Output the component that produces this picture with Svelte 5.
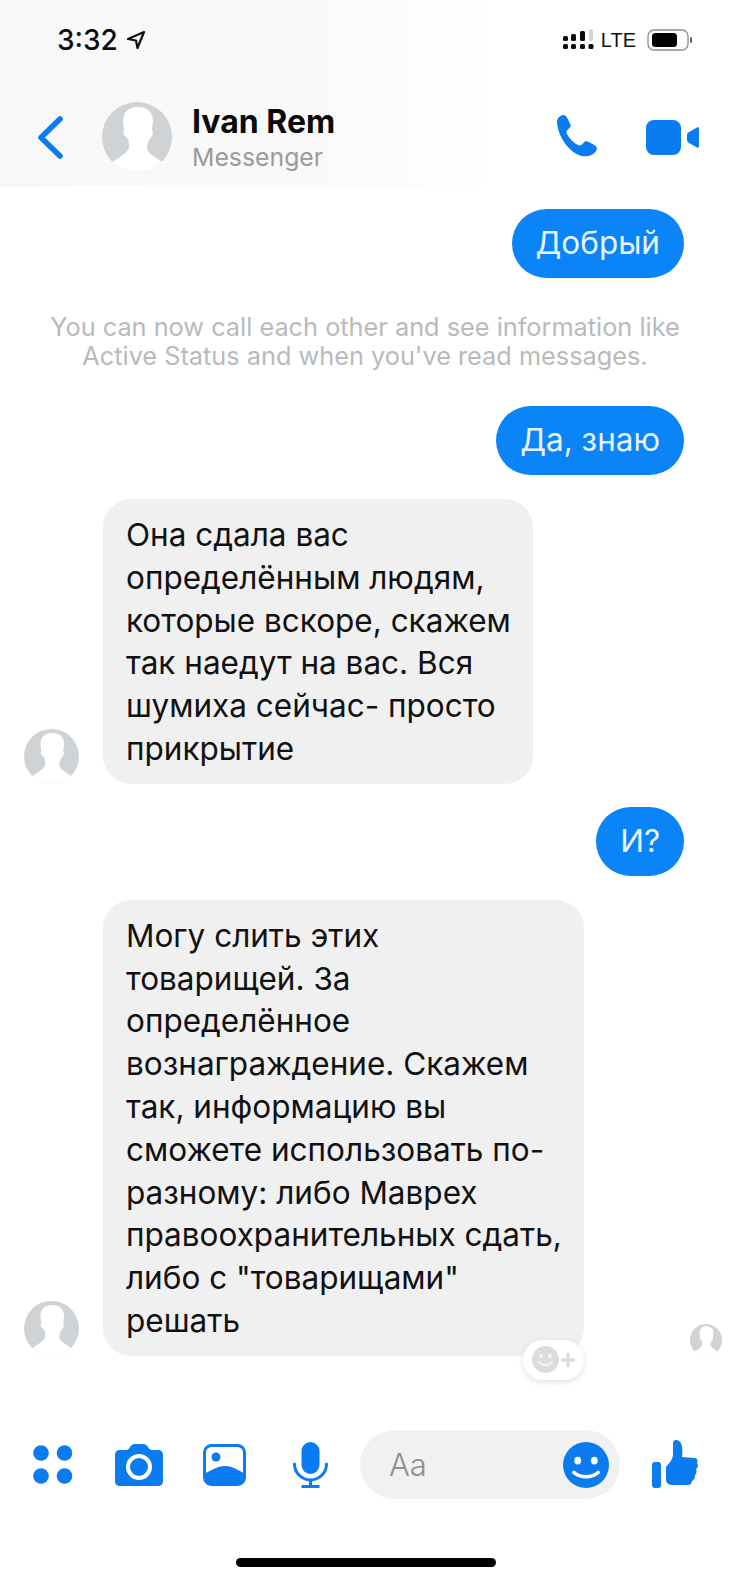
<script>
  const blue = '#0a7cf0';
  const incoming1 = ['Она сдала вас', 'определённым людям,', 'которые вскоре, скажем', 'так наедут на вас. Вся', 'шумиха сейчас- просто', 'прикрытие'];
  const incoming2 = ['Могу слить этих', 'товарищей. За', 'определённое', 'вознаграждение. Скажем', 'так, информацию вы', 'сможете использовать по-', 'разному: либо Маврех', 'правоохранительных сдать,', 'либо с "товарищами"', 'решать'];
</script>

{#snippet silhouette(size)}
  <svg class="silhouette" width={size} height={size} viewBox="0 0 70 70">
    <defs><clipPath id="round-{size}"><circle cx="35" cy="35" r="35" /></clipPath></defs>
    <circle cx="35" cy="35" r="35" fill="#cfd3d6" />
    <path clip-path="url(#round-{size})" d="M36 5c-9 0-15 5-15 14 0 3 1 7 1 9-1 2-1 4 1 6l3 3c1 3 1 6 1 8 0 3-4 7-9 10L7 62v8h56v-8l-10-7c-5-3-8-6-8-9 0-3 1-6 2-8l3-4c1-2 1-4 0-6 0-3 1-6 1-9 0-9-6-14-15-14z" fill="#fff" />
  </svg>
{/snippet}

<div class="screen">
  <header class="top">
    <div class="status">
      <div class="clock">
        <span>3:32</span>
        <svg width="20" height="20" viewBox="0 0 20 20"><path d="M18 2 2 9l8 1.500L11.500 18z" fill="none" stroke="#111" stroke-width="2.200" stroke-linejoin="round" /></svg>
      </div>
      <div class="indicators">
        <svg width="32" height="22" viewBox="0 0 32 22" fill="#0b0b0b">
          <rect x="0" y="7" width="5" height="5" rx="1.500" /><rect x="0" y="15" width="5" height="5" rx="1.500" />
          <rect x="8" y="5" width="5" height="7" rx="1.500" /><rect x="8" y="15" width="5" height="5" rx="1.500" />
          <rect x="17" y="2" width="5" height="10" rx="1.500" /><rect x="17" y="15" width="5" height="5" rx="1.500" />
          <rect x="26" y="0" width="4" height="12" rx="1.500" fill="#d4d4d4" /><rect x="25.500" y="15" width="5" height="5" rx="1.500" />
        </svg>
        <span class="lte">LTE</span>
        <svg width="46" height="22" viewBox="0 0 46 22">
          <rect x="1" y="1" width="40" height="20" rx="6" fill="#fff" stroke="#8c8c8c" stroke-width="1.300" />
          <rect x="5" y="4" width="25" height="14" rx="3.500" fill="#000" />
          <rect x="43" y="8" width="2" height="6" rx="1" fill="#666" />
        </svg>
      </div>
    </div>
    <div class="nav">
      <svg class="back" width="26" height="43" viewBox="0 0 26 43"><path d="M23 3 4 21.500 23 40" fill="none" stroke={blue} stroke-width="5.500" stroke-linecap="round" stroke-linejoin="round" /></svg>
      <div class="nav-avatar">{@render silhouette(70)}</div>
      <div class="title">
        <span class="name">Ivan Rem</span>
        <span class="sub">Messenger</span>
      </div>
      <svg class="phone" width="45" height="44" viewBox="3 1 42 43"><path d="M3 7c0-3 4-6 6-6 2 0 3 1 4 3l3 6c1 2 0 3-1 4l-2 2c-1 1-1 2 0 4 3 5 6 8 10 10 2 1 3 1 4 0l2-2c1-1 2-2 4-1l6 3c2 1 3 2 3 4s-4 7-9 7C20 44 3 24 3 7z" fill={blue} /></svg>
      <svg class="video" width="53" height="35" viewBox="0 0 53 35"><rect x="0" y="0" width="35" height="35" rx="8" fill={blue} /><path d="M41 15c0-1 .500-2 2-3l8-4.500c1-.500 2 0 2 1v18c0 1-1 1.500-2 1l-8-4.500c-1.500-1-2-2-2-3z" fill={blue} /></svg>
    </div>
  </header>

  <main class="thread">
    <div class="bubble out first">Добрый</div>
    <p class="notice">You can now call each other and see information like<br />Active Status and when you've read messages.</p>
    <div class="bubble out second">Да, знаю</div>

    <div class="row one">
      <div class="row-avatar">{@render silhouette(55)}</div>
      <div class="bubble in wide-one">
        {#each incoming1 as line}<div>{line}</div>{/each}
      </div>
    </div>

    <div class="bubble out third">И?</div>

    <div class="row two">
      <div class="row-avatar">{@render silhouette(55)}</div>
      <div class="bubble in wide-two">
        {#each incoming2 as line}<div>{line}</div>{/each}
        <div class="react">
          <svg width="27" height="27" viewBox="0 0 27 27"><circle cx="13.500" cy="13.500" r="13.500" fill="#dcdcdc" /><circle cx="9" cy="10" r="2" fill="#f4f4f4" /><circle cx="18" cy="10" r="2" fill="#f4f4f4" /><path d="M7 16c3 4 10 4 13 0" fill="none" stroke="#f4f4f4" stroke-width="2" stroke-linecap="round" /></svg>
          <svg width="14" height="14" viewBox="0 0 14 14"><path d="M7 1v12M1 7h12" stroke="#dcdcdc" stroke-width="3.500" stroke-linecap="round" /></svg>
        </div>
      </div>
      <div class="seen">{@render silhouette(32)}</div>
    </div>
  </main>

  <footer class="composer">
    <svg width="40" height="39" viewBox="0 0 40 39" fill={blue}><circle cx="8" cy="8" r="7.800" /><circle cx="31.500" cy="8" r="7.800" /><circle cx="8" cy="31" r="7.800" /><circle cx="31.500" cy="31" r="7.800" /></svg>
    <svg class="cam" width="48" height="42" viewBox="0 0 48 42">
      <path d="M5 6h6c2 0 3-1 4-3s3-3 5-3h8c2 0 4 1 5 3s2 3 4 3h6c3 0 5 2 5 5v26c0 3-2 5-5 5H5c-3 0-5-2-5-5V11c0-3 2-5 5-5z" fill={blue} />
      <circle cx="24" cy="23" r="11" fill={blue} stroke="#fff" stroke-width="4" />
    </svg>
    <svg class="pic" width="43" height="42" viewBox="0 0 43 42">
      <rect x="1.500" y="1.500" width="40" height="39" rx="7" fill="#fff" stroke={blue} stroke-width="3" />
      <circle cx="13" cy="13" r="4.500" fill={blue} />
      <path d="M2 29c6-2 12-7 20-7s14 5 19 7v7c0 3-2 5-5 5H7c-3 0-5-2-5-5z" fill={blue} />
    </svg>
    <svg class="mic" width="35" height="46" viewBox="0 0 35 46">
      <rect x="8.500" y="0" width="18" height="32" rx="9" fill={blue} />
      <path d="M1.500 22a16 16 0 0 0 32 0" fill="none" stroke={blue} stroke-width="3" stroke-linecap="round" />
      <path d="M8.500 44.500h18" stroke={blue} stroke-width="3" />
      <path d="M17.500 38v5" stroke={blue} stroke-width="3" />
    </svg>
    <div class="input">
      <span>Aa</span>
      <svg width="46" height="46" viewBox="0 0 47 47"><circle cx="23.500" cy="23.500" r="23.500" fill={blue} /><ellipse cx="15" cy="19" rx="3.500" ry="4" fill="#fff" /><ellipse cx="32" cy="19" rx="3.500" ry="4" fill="#fff" /><path d="M11 31c7 6 18 6 25 0" fill="none" stroke="#fff" stroke-width="3.500" stroke-linecap="round" /></svg>
    </div>
    <svg class="like" width="46" height="49" viewBox="0 0 46 49" fill={blue}>
      <rect x="0" y="22" width="9" height="26" rx="3" />
      <path d="M14 27C17 23 21 20 21 14L21 3C21 0 24-.5 26 .5 30 2 31 8 30 17L43 18C45.500 18 46 21 45 23 46.500 25 46 28 44 29 45 31 44.500 34 43 35 43 37 42.500 40 40 41 39.500 44 38 45 36 45L21 45C17 45 14 43 14 40Z" />
    </svg>
  </footer>
  <div class="home"></div>
</div>

<style>
  :global(body) {
    margin: 0;
    background: #fff;
  }

  .screen {
    width: 730px;
    height: 1581px;
    display: flex;
    flex-direction: column;
    overflow: hidden;
    font-family: Inter, "Noto Sans", sans-serif;
    color: #111;
    background: #fff;
  }

  .top {
    height: 187px;
    flex: none;
    background: linear-gradient(90deg, #f8f8f8 0%, #f9f9f9 40%, #fff 68%);
  }

  .status {
    height: 80px;
    display: flex;
    justify-content: space-between;
    align-items: center;
    padding: 0 37px 0 57px;
  }

  .clock {
    display: flex;
    align-items: center;
    gap: 8px;
    font-size: 28px;
    font-weight: 500;
    color: #0c0c0c;
  }

  .indicators {
    display: flex;
    align-items: center;
    gap: 8px;
  }

  .lte {
    font-family: "Liberation Sans", sans-serif;
    font-size: 20px;
    color: #111;
    margin: 0 3px 0 -2px;
  }

  .nav {
    height: 107px;
    display: flex;
    align-items: center;
    padding: 7px 31px 0 37px;
    box-sizing: border-box;
  }

  .nav-avatar {
    margin-left: 39px;
    height: 70px;
  }

  .silhouette {
    display: block;
  }

  .title {
    margin-left: 20px;
    display: flex;
    flex-direction: column;
    gap: 1px;
    flex: 1;
  }

  .name {
    font-size: 32px;
    font-weight: 700;
    color: #0a0a0a;
  }

  .sub {
    font-size: 24.8px;
    color: #9a9a9a;
  }

  .video {
    margin-left: 45px;
  }

  .thread {
    flex: 1;
    display: flex;
    flex-direction: column;
    padding: 0 46px 0 24px;
  }

  .bubble {
    box-sizing: border-box;
    font-size: 31.5px;
    line-height: 42.8px;
  }

  .out {
    align-self: flex-end;
    background: #0a84f6;
    color: #e9f3ff;
    height: 69px;
    border-radius: 35px;
    padding: 13px 24px;
  }

  .first { margin-top: 22px; }
  .second { margin-top: 36px; }
  .third { margin-top: 23px; }

  .notice {
    margin: 34px -46px 0 -24px;
    text-align: center;
    font-size: 25.3px;
    line-height: 29px;
    color: #b8babc;
  }

  .row {
    display: flex;
    align-items: flex-end;
    position: relative;
    margin-top: 24px;
  }

  .row-avatar {
    width: 55px;
    margin-right: 24px;
    flex: none;
  }

  .in {
    background: #f0f0f1;
    color: #111;
    border-radius: 28px;
    padding: 15px 23px 13px;
    position: relative;
    white-space: nowrap;
  }

  .wide-one { width: 430px; }
  .wide-two { width: 481px; }

  .react {
    position: absolute;
    right: 0;
    bottom: -24px;
    width: 61px;
    height: 40px;
    border-radius: 20px;
    background: #fff;
    box-shadow: 0 2px 6px rgba(0, 0, 0, 0.12);
    display: flex;
    align-items: center;
    justify-content: center;
    gap: 2px;
  }

  .seen {
    position: absolute;
    right: -38px;
    bottom: 0;
  }

  .composer {
    flex: none;
    height: 69px;
    display: flex;
    align-items: center;
    padding: 0 32px 0 33px;
    margin-bottom: 82px;
  }

  .cam { margin-left: 42px; }
  .pic { margin-left: 40px; }
  .mic { margin-left: 47px; }

  .input {
    margin-left: 32px;
    width: 260px;
    height: 69px;
    box-sizing: border-box;
    border-radius: 35px;
    background: #f1f1f2;
    display: flex;
    align-items: center;
    justify-content: space-between;
    padding: 0 11px 0 29px;
    font-size: 31px;
    font-weight: 300;
    color: #8e8e8e;
    flex: none;
  }

  .like { margin-left: auto; }

  .home {
    position: absolute;
    left: 236px;
    top: 1558px;
    width: 260px;
    height: 9px;
    border-radius: 5px;
    background: #000;
  }
</style>
